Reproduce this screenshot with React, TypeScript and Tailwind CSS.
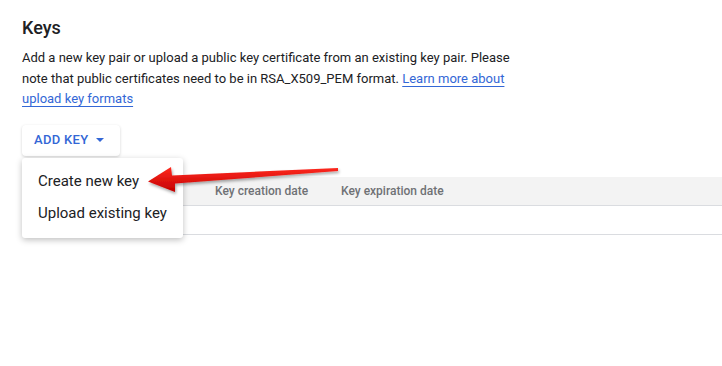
export default function App() {
  return (
    <div
      className="relative h-[366px] w-[722px] overflow-hidden bg-white text-[#202124]"
      style={{ fontFamily: "Roboto, 'Liberation Sans', sans-serif" }}
    >
      <div className="pl-[22px] pt-[17px]">
        <h1 className="text-[18px] font-medium leading-[22px]">Keys</h1>
        <p className="mt-[9px] whitespace-nowrap text-[13px] leading-[20.5px]">
          Add a new key pair or upload a public key certificate from an existing key pair. Please
          <br />
          note that public certificates need to be in RSA_X509_PEM format.{" "}
          <a className="text-[#3367d6] underline underline-offset-[3px]" href="#">
            Learn more about
            <br />
            upload key formats
          </a>
        </p>

        <div className="relative mt-[15px]">
          <button className="flex h-[31px] w-[98px] items-center gap-[8px] rounded-[4px] bg-white pl-[12px] text-[13px] font-medium tracking-[0.3px] text-[#3367d6] shadow-[0_1px_3px_rgba(0,0,0,0.18)]">
            ADD KEY
            <span className="h-0 w-0 border-x-[4px] border-t-[4px] border-x-transparent border-t-[#3367d6]" />
          </button>

          <div className="mt-[21px]">
            <div className="flex h-[29px] items-center border-b border-[#dadce0] bg-[#f3f3f3] pl-[193px] text-[12px] font-medium text-[#6f7175]">
              <span className="w-[126px]">Key creation date</span>
              <span>Key expiration date</span>
            </div>
            <div className="h-[29px] border-b border-[#dadce0]" />
          </div>

          <div className="absolute left-0 top-[33px] w-[161px] rounded-[3px] bg-white py-[8px] text-[15px] shadow-[0_2px_6px_rgba(0,0,0,0.25)]">
            <div className="flex h-[32px] items-center pl-[16px]">Create new key</div>
            <div className="flex h-[32px] items-center pl-[16px]">Upload existing key</div>
          </div>
        </div>
      </div>

      <svg className="absolute left-0 top-0" width="722" height="366">
        <defs>
          <linearGradient id="arrowFill" x1="0" y1="0" x2="0" y2="1">
            <stop offset="0" stopColor="#ff2a1f" />
            <stop offset="1" stopColor="#c20000" />
          </linearGradient>
          <filter id="arrowShadow" x="-10%" y="-50%" width="120%" height="200%">
            <feDropShadow dx="1" dy="2" stdDeviation="1.5" floodColor="#000" floodOpacity="0.35" />
          </filter>
        </defs>
        <polygon
          points="148,181.5 171,167 172,175.5 338,168 338,171 175,183.5 175,192"
          fill="url(#arrowFill)"
          filter="url(#arrowShadow)"
        />
      </svg>
    </div>
  );
}
